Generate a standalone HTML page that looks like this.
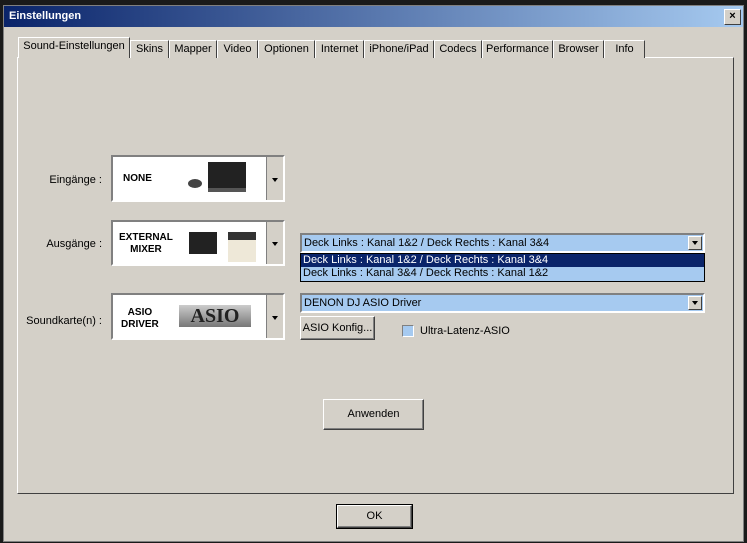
<!DOCTYPE html><html><head><style>
body{margin:0;width:747px;height:543px;background:#1a1a1a;position:relative;overflow:hidden;font-family:"Liberation Sans",sans-serif;font-size:11px;color:#000}
.a{position:absolute}
.win{left:3px;top:5px;width:741px;height:537px;background:#d4d0c8;border:1px solid #808080;box-sizing:border-box}
.title{left:4px;top:6px;width:739px;height:21px;background:linear-gradient(90deg,#0a246a,#a6caf0);color:#fff;font-weight:bold;font-size:11px;line-height:21px;padding-left:5px;box-sizing:border-box}
.x{right:6px;top:9px;width:15px;height:14px;background:#d4d0c8;border:1px solid;border-color:#fff #404040 #404040 #fff;color:#000;font-size:11px;line-height:13px;text-align:center;font-weight:bold}
.panel{left:17px;top:57px;width:717px;height:437px;border:1px solid;border-color:#fff #404040 #404040 #fff;box-sizing:border-box}
.tab{top:40px;height:18px;border:1px solid;border-color:#fff #404040 transparent #fff;border-bottom:none;box-sizing:border-box;line-height:16px;text-align:center;background:#d4d0c8}
.box{left:111px;width:174px;background:#fff;border:2px solid;border-color:#808080 #fff #fff #808080;box-sizing:border-box}
.dd{right:0;top:0;bottom:0;width:16px;background:#d4d0c8;border-left:1px solid #808080}
.dd:after{content:"";position:absolute;left:5px;top:50%;border:3px solid transparent;border-top:4px solid #000;margin-top:-1px}
.lbl{width:100px;left:2px;text-align:right}
.bt{font-weight:bold;font-size:10px;text-align:center;line-height:12px}
.combo{left:300px;width:405px;height:20px;background:#a6caf0;border:2px solid;border-color:#808080 #fff #fff #808080;box-sizing:border-box;line-height:16px;padding-left:2px}
.cb{right:1px;top:1px;width:14px;height:14px;background:#d4d0c8;border:1px solid;border-color:#fff #404040 #404040 #fff;box-sizing:border-box}
.cb:after{content:"";position:absolute;left:3px;top:4px;border:3px solid transparent;border-top:4px solid #000}
.btn{background:#d4d0c8;border:1px solid;border-color:#fff #404040 #404040 #fff;box-shadow:inset -1px -1px #808080;box-sizing:border-box;text-align:center}
</style></head><body>
<div class="a win"></div>
<div class="a title">Einstellungen</div>
<div class="a x">×</div>
<div class="a panel"></div>
<div class="a tab" style="left:18px;width:112px;top:37px;height:21px;border-bottom:none;z-index:2">Sound-Einstellungen</div>
<div class="a tab" style="left:130px;width:39px">Skins</div>
<div class="a tab" style="left:169px;width:48px">Mapper</div>
<div class="a tab" style="left:217px;width:41px">Video</div>
<div class="a tab" style="left:258px;width:57px">Optionen</div>
<div class="a tab" style="left:315px;width:49px">Internet</div>
<div class="a tab" style="left:364px;width:70px">iPhone/iPad</div>
<div class="a tab" style="left:434px;width:48px">Codecs</div>
<div class="a tab" style="left:482px;width:71px">Performance</div>
<div class="a tab" style="left:553px;width:51px">Browser</div>
<div class="a tab" style="left:604px;width:41px">Info</div>

<div class="a lbl" style="top:174px">Eingänge :</div>
<div class="a box" style="top:155px;height:47px"><div class="a bt" style="left:10px;top:16px">NONE</div>
<div class="a" style="left:95px;top:5px;width:38px;height:26px;background:#222;border-bottom:4px solid #555"></div><div class="a" style="left:75px;top:22px;width:14px;height:9px;background:#444;border-radius:50%"></div><div class="a dd"></div></div>
<div class="a lbl" style="top:238px">Ausgänge :</div>
<div class="a box" style="top:220px;height:46px"><div class="a bt" style="left:6px;top:10px">EXTERNAL<br>MIXER</div>
<div class="a" style="left:76px;top:10px;width:28px;height:22px;background:#222"></div><div class="a" style="left:115px;top:10px;width:28px;height:30px;background:#eee8d8;border-top:8px solid #333;box-sizing:border-box"></div><div class="a dd"></div></div>
<div class="a lbl" style="top:315px">Soundkarte(n) :</div>
<div class="a box" style="top:293px;height:47px"><div class="a bt" style="left:8px;top:12px">ASIO<br>DRIVER</div>
<div class="a" style="left:66px;top:10px;width:72px;height:22px;background:linear-gradient(#ccc,#777);color:#222;font-weight:bold;font-size:20px;line-height:22px;text-align:center;font-family:'Liberation Serif',serif">ASIO</div><div class="a dd"></div></div>

<div class="a combo" style="top:233px">Deck Links : Kanal 1&amp;2 / Deck Rechts : Kanal 3&amp;4<div class="a cb"></div></div>
<div class="a" style="left:300px;top:253px;width:405px;height:29px;border:1px solid #000;box-sizing:border-box;background:#a6caf0;line-height:13px">
<div style="background:#0a246a;color:#fff;padding-left:2px">Deck Links : Kanal 1&amp;2 / Deck Rechts : Kanal 3&amp;4</div>
<div style="padding-left:2px">Deck Links : Kanal 3&amp;4 / Deck Rechts : Kanal 1&amp;2</div></div>
<div class="a combo" style="top:293px">DENON DJ ASIO Driver<div class="a cb"></div></div>
<div class="a btn" style="left:300px;top:316px;width:75px;height:24px;line-height:22px">ASIO Konfig...</div>
<div class="a" style="left:402px;top:325px;width:12px;height:12px;background:#a6caf0;border:1px solid;border-color:#808080 #fff #fff #808080;box-sizing:border-box"></div>
<div class="a" style="left:420px;top:325px">Ultra-Latenz-ASIO</div>
<div class="a btn" style="left:323px;top:399px;width:101px;height:31px;line-height:29px">Anwenden</div>
<div class="a btn" style="left:337px;top:505px;width:75px;height:23px;line-height:21px;outline:1px solid #000">OK</div>
</body></html>
